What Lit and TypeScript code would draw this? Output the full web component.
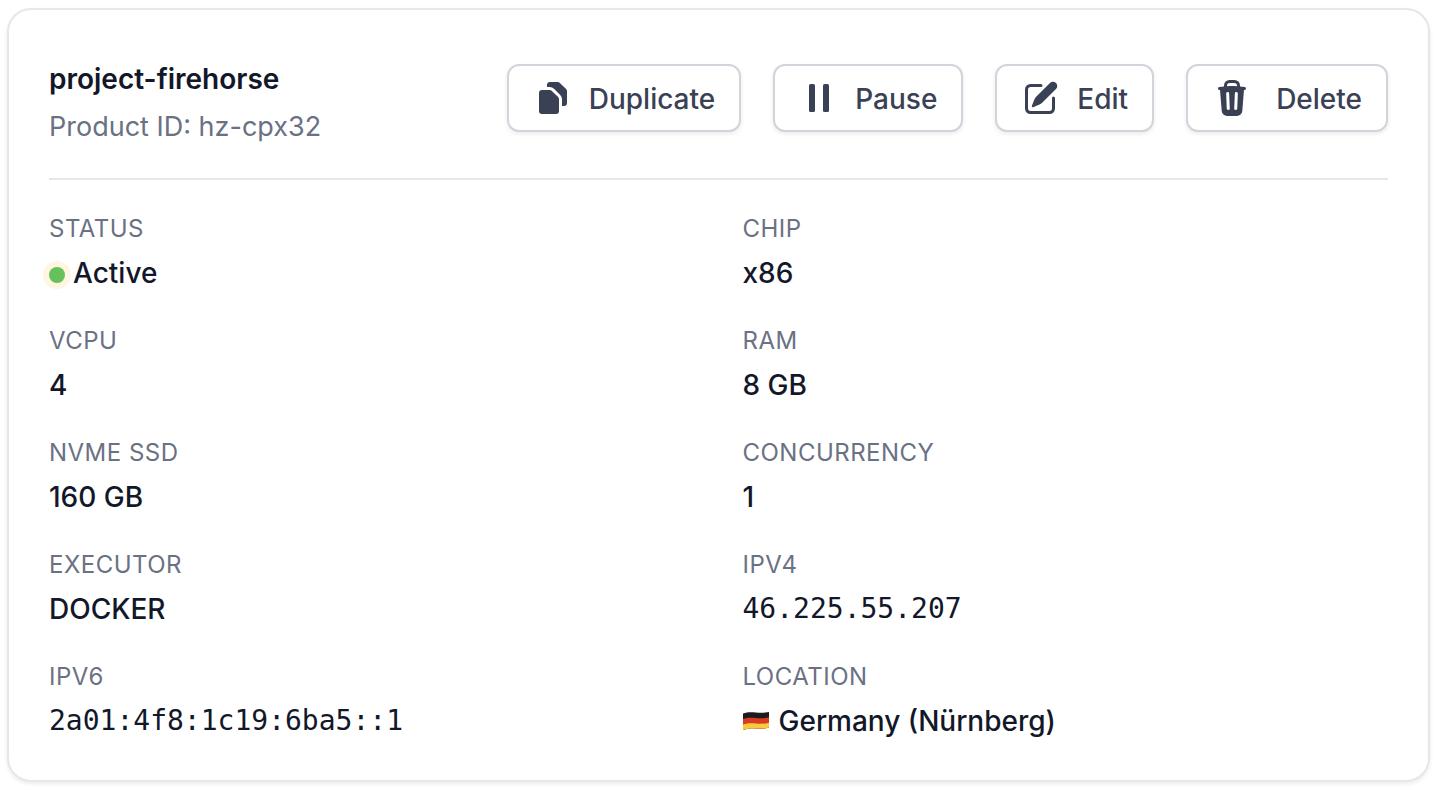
import { LitElement, html, css, svg, nothing } from "lit";
import { customElement } from "lit/decorators.js";

const duplicateIcon = svg`
  <path d="M7 3.5A1.5 1.5 0 018.5 2h3.879a1.5 1.5 0 011.06.44l3.122 3.12A1.5 1.5 0 0117 6.622V12.5a1.5 1.5 0 01-1.5 1.5h-1v-3.379a3 3 0 00-.879-2.121L10.5 5.379A3 3 0 008.379 4.5H7v-1z"/>
  <path d="M4.5 6A1.5 1.5 0 003 7.5v9A1.5 1.5 0 004.5 18h7a1.5 1.5 0 001.5-1.5v-5.879a1.5 1.5 0 00-.44-1.06L9.44 6.439A1.5 1.5 0 008.378 6H4.5z"/>`;

const pauseIcon = svg`
  <rect x="5" y="3" width="3" height="14" rx=".75"/>
  <rect x="12" y="3" width="3" height="14" rx=".75"/>`;

const editIcon = svg`
  <path d="M5.433 13.917l1.262-3.155A4 4 0 017.58 9.42l6.92-6.918a2.121 2.121 0 013 3l-6.92 6.918c-.383.383-.84.685-1.343.886l-3.154 1.262a.5.5 0 01-.65-.65z"/>
  <path d="M3.5 5.75c0-.69.56-1.25 1.25-1.25H10A.75.75 0 0010 3H4.75A2.75 2.75 0 002 5.75v9.5A2.75 2.75 0 004.75 18h9.5A2.75 2.75 0 0017 15.25V10a.75.75 0 00-1.5 0v5.25c0 .69-.56 1.25-1.25 1.25h-9.5c-.69 0-1.25-.56-1.25-1.25v-9.5z"/>`;

const trashIcon = svg`
  <path fill-rule="evenodd" d="M8.75 1A2.75 2.75 0 006 3.75v.443c-.795.077-1.584.176-2.365.298a.75.75 0 10.23 1.482l.149-.022.841 10.518A2.75 2.75 0 007.596 19h4.807a2.75 2.75 0 002.742-2.53l.841-10.52.149.023a.75.75 0 00.23-1.482A41.03 41.03 0 0014 4.193V3.75A2.75 2.75 0 0011.25 1h-2.5zM10 4c.84 0 1.673.025 2.5.075V3.75c0-.69-.56-1.25-1.25-1.25h-2.5c-.69 0-1.25.56-1.25 1.25v.325C8.327 4.025 9.16 4 10 4zM8.58 7.72a.75.75 0 00-1.5.06l.3 7.5a.75.75 0 101.5-.06l-.3-7.5zm4.34.06a.75.75 0 10-1.5-.06l-.3 7.5a.75.75 0 101.5.06l.3-7.5z"/>`;

const flag = svg`
  <defs>
    <clipPath id="wave"><path d="M0 2.500C5 .8 8 1.200 13 1.600s8 .4 13-.6v15.500c-5 1.300-8 1.200-13 .9s-8 0-13 1.600z"/></clipPath>
  </defs>
  <g clip-path="url(#wave)">
    <rect width="26" height="20" fill="#1d1b1a"/>
    <path d="M0 8c5-1.700 8-1.400 13-1s8 .4 13-.6V20H0z" fill="#d93a25"/>
    <path d="M0 13.500c5-1.700 8-1.400 13-1s8 .4 13-.8V20H0z" fill="#f5cb3a"/>
  </g>`;

const actions = [
  { name: "Duplicate", icon: duplicateIcon },
  { name: "Pause", icon: pauseIcon },
  { name: "Edit", icon: editIcon },
  { name: "Delete", icon: trashIcon, wide: true },
];

const details: { label: string; value: string; kind?: string }[] = [
  { label: "Status", value: "Active", kind: "status" },
  { label: "Chip", value: "x86" },
  { label: "vCPU", value: "4" },
  { label: "RAM", value: "8 GB" },
  { label: "NVMe SSD", value: "160 GB" },
  { label: "Concurrency", value: "1" },
  { label: "Executor", value: "DOCKER" },
  { label: "IPv4", value: "46.225.55.207", kind: "mono" },
  { label: "IPv6", value: "2a01:4f8:1c19:6ba5::1", kind: "mono" },
  { label: "Location", value: "Germany (Nürnberg)", kind: "location" },
];

@customElement("app-root")
export class AppRoot extends LitElement {
  static styles = css`
    :host {
      display: block;
      padding: 8px 6px 8px 7px;
      background: #fff;
      color: #121829;
      font: 500 28px/40px Inter, sans-serif;
    }
    .card {
      padding: 0 40px 39px;
      border: 2px solid #e5e7eb;
      border-radius: 24px;
      background: #fff;
      box-shadow: 0 2px 4px rgba(0, 0, 0, 0.08);
    }
    .header {
      display: flex;
      flex-wrap: wrap;
      align-items: flex-start;
      justify-content: space-between;
      gap: 24px 32px;
      padding: 49px 0 31px;
      border-bottom: 2px solid #e5e7eb;
    }
    .name {
      margin: 0;
      font-size: 28px;
      font-weight: 600;
    }
    .product {
      margin: 8px 0 0;
      color: #6b7184;
      font-size: 27px;
      font-weight: 400;
    }
    .actions {
      display: flex;
      flex-wrap: wrap;
      gap: 16px 32px;
      padding-top: 5px;
    }
    .action {
      display: flex;
      align-items: center;
      gap: 16px;
      margin: 0;
      padding: 12px 24px;
      border: 2px solid #d1d5db;
      border-radius: 12px;
      background: #fff;
      box-shadow: 0 2px 4px rgba(0, 0, 0, 0.08);
      color: #3a4154;
      font: inherit;
      cursor: pointer;
    }
    .action.wide {
      gap: 24px;
    }
    .text {
      padding-top: 2px;
      line-height: 38px;
    }
    .icon {
      width: 40px;
      height: 40px;
      fill: currentColor;
    }
    .details {
      display: grid;
      grid-template-columns: 1fr 1fr;
      gap: 32px 48px;
      margin: 0;
      padding-top: 33px;
    }
    .label {
      color: #6b7184;
      font-size: 24px;
      font-weight: 400;
      line-height: 32px;
      letter-spacing: 0.02em;
      text-transform: uppercase;
    }
    .value {
      display: flex;
      align-items: center;
      gap: 8px;
      margin: 8px 0 0;
    }
    .location {
      gap: 10px;
    }
    .mono {
      font-family: "DejaVu Sans Mono", monospace;
      font-weight: 400;
    }
    .dot {
      width: 16px;
      height: 16px;
      margin-top: 4px;
      border-radius: 50%;
      background: #66c15a;
      box-shadow: 0 0 0 6px #fef6e0;
    }
    .flag {
      width: 26px;
      height: 20px;
    }
  `;

  render() {
    return html`
      <article class="card">
        <header class="header">
          <div>
            <h2 class="name">project-firehorse</h2>
            <p class="product">Product ID: hz-cpx32</p>
          </div>
          <div class="actions">
            ${actions.map(
              (a) => html`
                <button type="button" class="action ${a.wide ? "wide" : ""}">
                  <svg class="icon" viewBox="0 0 20 20" aria-hidden="true">${a.icon}</svg>
                  <span class="text">${a.name}</span>
                </button>
              `
            )}
          </div>
        </header>
        <dl class="details">
          ${details.map(
            (d) => html`
              <div>
                <dt class="label">${d.label}</dt>
                <dd class="value ${d.kind ?? ""}">
                  ${d.kind === "status" ? html`<span class="dot"></span>` : nothing}
                  ${d.kind === "location"
                    ? html`<svg class="flag" viewBox="0 0 26 20" aria-hidden="true">${flag}</svg>`
                    : nothing}
                  <span>${d.value}</span>
                </dd>
              </div>
            `
          )}
        </dl>
      </article>
    `;
  }
}
